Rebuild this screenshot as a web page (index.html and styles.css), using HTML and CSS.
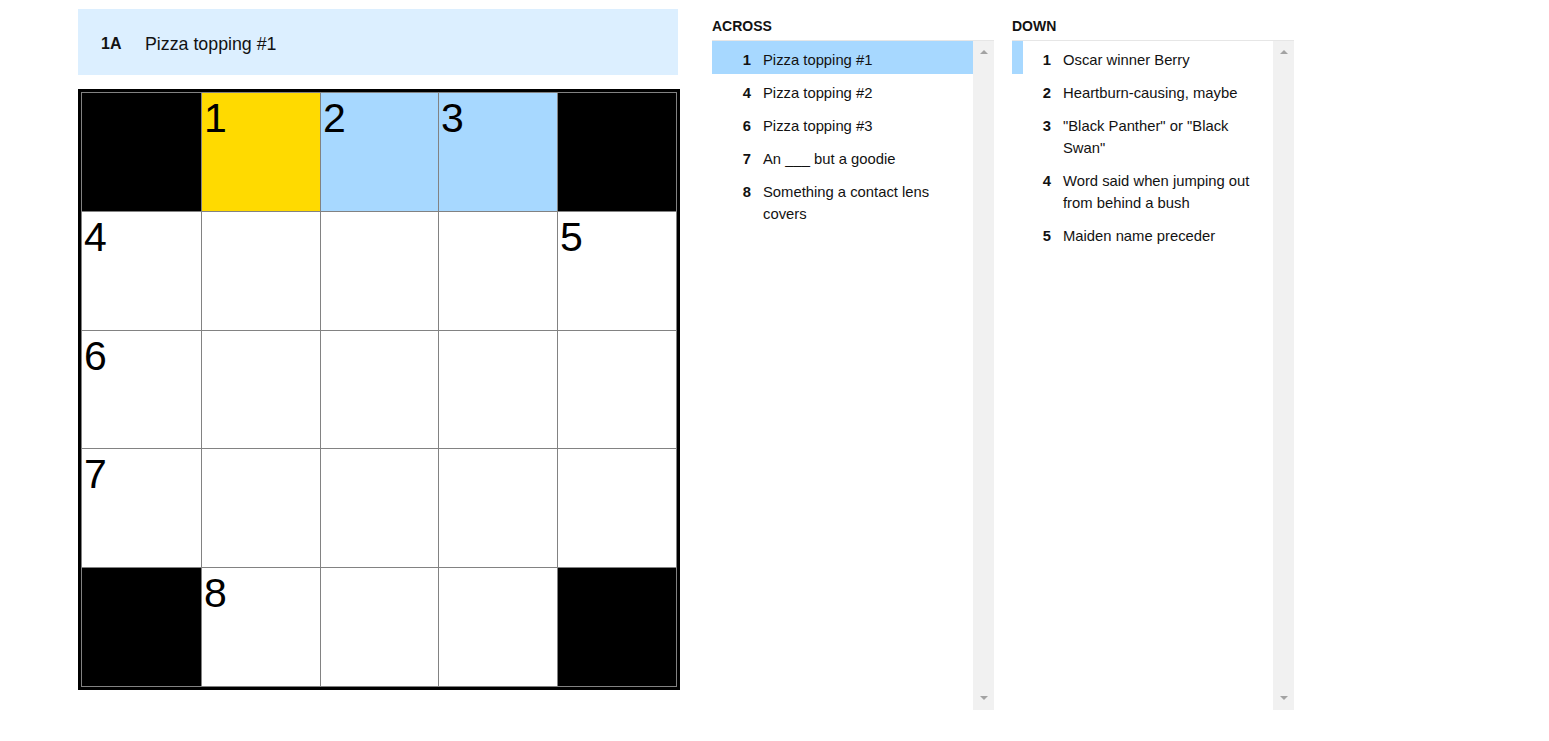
FILE: index.html
```html
<!DOCTYPE html>
<html>
<head>
<meta charset="utf-8">
<link rel="stylesheet" href="styles.css">
</head>
<body>
<div class="page">
  <div class="board">
    <div class="cluebar"><span class="cluebar-num">1A</span><span class="cluebar-text">Pizza topping #1</span></div>
    <div class="grid-frame">
      <div class="grid">
        <div class="cell block"></div>
        <div class="cell current"><span class="num">1</span></div>
        <div class="cell word"><span class="num">2</span></div>
        <div class="cell word"><span class="num">3</span></div>
        <div class="cell block"></div>

        <div class="cell"><span class="num">4</span></div>
        <div class="cell"></div>
        <div class="cell"></div>
        <div class="cell"></div>
        <div class="cell"><span class="num">5</span></div>

        <div class="cell"><span class="num">6</span></div>
        <div class="cell"></div>
        <div class="cell"></div>
        <div class="cell"></div>
        <div class="cell"></div>

        <div class="cell"><span class="num">7</span></div>
        <div class="cell"></div>
        <div class="cell"></div>
        <div class="cell"></div>
        <div class="cell"></div>

        <div class="cell block"></div>
        <div class="cell"><span class="num">8</span></div>
        <div class="cell"></div>
        <div class="cell"></div>
        <div class="cell block"></div>
      </div>
    </div>
  </div>

  <div class="lists">
    <section class="clue-list">
      <h3 class="list-title">ACROSS</h3>
      <div class="list-box">
        <ol class="clues">
          <li class="clue selected"><span class="clue-num">1</span><span class="clue-text">Pizza topping #1</span></li>
          <li class="clue"><span class="clue-num">4</span><span class="clue-text">Pizza topping #2</span></li>
          <li class="clue"><span class="clue-num">6</span><span class="clue-text">Pizza topping #3</span></li>
          <li class="clue"><span class="clue-num">7</span><span class="clue-text">An ___ but a goodie</span></li>
          <li class="clue"><span class="clue-num">8</span><span class="clue-text">Something a contact lens covers</span></li>
        </ol>
        <div class="scrollbar"><span class="arrow up"></span><span class="arrow down"></span></div>
      </div>
    </section>
    <section class="clue-list">
      <h3 class="list-title">DOWN</h3>
      <div class="list-box">
        <ol class="clues">
          <li class="clue cross"><span class="clue-num">1</span><span class="clue-text">Oscar winner Berry</span></li>
          <li class="clue"><span class="clue-num">2</span><span class="clue-text">Heartburn-causing, maybe</span></li>
          <li class="clue"><span class="clue-num">3</span><span class="clue-text">"Black Panther" or "Black Swan"</span></li>
          <li class="clue"><span class="clue-num">4</span><span class="clue-text">Word said when jumping out from behind a bush</span></li>
          <li class="clue"><span class="clue-num">5</span><span class="clue-text">Maiden name preceder</span></li>
        </ol>
        <div class="scrollbar"><span class="arrow up"></span><span class="arrow down"></span></div>
      </div>
    </section>
  </div>
</div>
</body>
</html>
```
FILE: styles.css
```css
* { box-sizing: border-box; }
html, body { margin: 0; padding: 0; background: #fff; }
body { font-family: "Liberation Sans", Arial, sans-serif; color: #121212; }

.page {
  display: flex;
  align-items: flex-start;
  gap: 32px;
  padding: 9px 0 0 78px;
}

.board { width: 602px; display: flex; flex-direction: column; gap: 14px; }

.cluebar {
  width: 600px;
  height: 66px;
  background: #dcefff;
  display: flex;
  align-items: center;
  padding: 4px 0 0 23px;
}
.cluebar-num { font-weight: bold; font-size: 16px; width: 44px; }
.cluebar-text { font-size: 17.8px; }

.grid-frame {
  border: 3px solid #000;
  width: 602px;
  height: 601px;
}
.grid {
  width: 100%;
  height: 100%;
  display: grid;
  grid-template-columns: 119px 118px 117px 118px 118px;
  grid-template-rows: 118px 118px 117px 118px 118px;
  gap: 1px;
  padding: 1px;
  background: #828282;
}
.cell { background: #fff; }
.cell.block { background: #000; }
.cell.current { background: #ffda00; }
.cell.word { background: #a7d8ff; }
.num {
  display: block;
  font-size: 41px;
  line-height: 1;
  padding: 5px 0 0 2px;
  color: #000;
}

.lists { display: flex; gap: 18px; padding-top: 1px; }
.clue-list { width: 282px; }
.list-title {
  margin: 0;
  font-size: 14px;
  font-weight: bold;
  height: 30px;
  line-height: 16px;
  padding-top: 8px;
}
.list-box {
  height: 670px;
  border-top: 1px solid #e6e6e6;
  display: flex;
}
.clues {
  list-style: none;
  margin: 0;
  padding: 0;
  flex: 1;
}
.clue {
  display: flex;
  font-size: 14.8px;
  line-height: 22px;
  padding: 8px 0 3px;
  border-left: 11px solid transparent;
}
.clue.selected { background: #a7d8ff; border-left-color: #a7d8ff; }
.clue.cross { border-left-color: #a7d8ff; }
.clue-num {
  font-weight: bold;
  width: 28px;
  text-align: right;
  flex: none;
}
.clue-text { padding-left: 12px; padding-right: 14px; }

.scrollbar {
  width: 21px;
  background: #f1f1f1;
  position: relative;
}
.arrow {
  position: absolute;
  left: 7px;
  width: 0; height: 0;
  border-left: 4px solid transparent;
  border-right: 4px solid transparent;
}
.arrow.up { top: 9px; border-bottom: 4px solid #a3a3a3; }
.arrow.down { bottom: 10px; border-top: 4px solid #a3a3a3; }
```
